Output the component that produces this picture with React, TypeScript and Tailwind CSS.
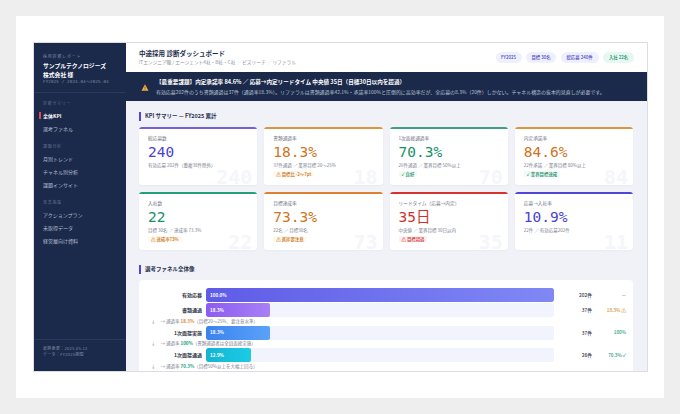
import React from "react";

const jp = "font-['Noto_Sans_CJK_JP','Noto_Sans',sans-serif]";
const mono = "font-['DejaVu_Sans_Mono','Noto_Sans_CJK_JP',monospace]";

const navGroups = [
    { title: "診断サマリー", items: ["全体KPI", "選考ファネル"] },
    { title: "課題分析", items: ["月別トレンド", "チャネル別分析", "課題インサイト"] },
    { title: "改善施策", items: ["アクションプラン", "未取得データ", "経営層向け資料"] },
];

const badges = [
    { label: "FY2025", cls: "w-[26px] bg-[#eef0fd] text-[#4f46c8]" },
    { label: "目標 30名", cls: "w-[30px] bg-[#eef0fd] text-[#4f46c8]" },
    { label: "総応募 240件", cls: "w-[38px] bg-[#eef0fd] text-[#4f46c8]" },
    { label: "入社 22名", cls: "w-[31px] bg-[#e6f8f1] text-[#0f8a62]" },
];

const kpis = [
    { label: "総応募数", value: "240", sub: "有効応募 202件（重複38件除外）", ghost: "240", bar: "bg-[#6f63d6]", color: "text-[#4a3fd0]" },
    { label: "書類通過率", value: "18.3%", sub: "37件通過 ／ 業界目標 20〜25%", ghost: "18", bar: "bg-[#d9963f]", color: "text-[#cf7420]", tag: "⚠ 目標比 -2〜7pt", tagCls: "bg-[#fff9ee] text-[#c96f12]" },
    { label: "1次面接通過率", value: "70.3%", sub: "26件通過 ／ 業界目標 50%以上", ghost: "70", bar: "bg-[#3f9f85]", color: "text-[#15906a]", tag: "✓ 良好", tagCls: "bg-[#f0fbf6] text-[#0f8a62]" },
    { label: "内定承諾率", value: "84.6%", sub: "22件承諾 ／ 業界目標 80%以上", ghost: "84", bar: "bg-[#d9963f]", color: "text-[#cf7420]", tag: "✓ 業界目標達成", tagCls: "bg-[#f0fbf6] text-[#0f8a62]" },
    { label: "入社数", value: "22", sub: "目標 30名 ／ 達成率 73.3%", ghost: "22", bar: "bg-[#22a078]", color: "text-[#15906a]", tag: "⚠ 達成率73%", tagCls: "bg-[#fff9ee] text-[#c96f12]" },
    { label: "目標達成率", value: "73.3%", sub: "22名 ／ 目標30名", ghost: "73", bar: "bg-[#dd8030]", color: "text-[#cf7420]", tag: "⚠ 進捗要注意", tagCls: "bg-[#fff9ee] text-[#c96f12]" },
    { label: "リードタイム（応募→内定）", value: "35日", sub: "中央値 ／ 業界目標 30日以内", ghost: "35", bar: "bg-[#d6332f]", color: "text-[#d22f2b]", tag: "⚠ 目標超過", tagCls: "bg-[#fdf0f0] text-[#d22f2b]" },
    { label: "応募→入社率", value: "10.9%", sub: "22件 ／ 有効応募202件", ghost: "11", bar: "bg-[#4f46d8]", color: "text-[#4a3fd0]" },
];

const funnel = [
    { name: "有効応募", pct: "100.0%", width: "100%", grad: "from-[#5f5be6] to-[#8088f5]", count: "202件", rate: "—", rateCls: "text-[#777]" },
    { name: "書類通過", pct: "18.3%", width: "18.3%", grad: "from-[#8b5cf0] to-[#a97ff5]", count: "37件", rate: "18.3% ⚠", rateCls: "text-[#d9912f]", noteVal: "18.3%", noteCls: "text-[#d9862f]", noteRest: "（目標20〜25%、要注意水準）" },
    { name: "1次面接実施", pct: "18.3%", width: "18.3%", grad: "from-[#3b82f0] to-[#5aa2f8]", count: "37件", rate: "100%", rateCls: "text-[#22a078]", noteVal: "100%", noteCls: "text-[#22a078]", noteRest: "（書類通過者は全員面接実施）" },
    { name: "1次面接通過", pct: "12.9%", width: "12.9%", grad: "from-[#14b4d0] to-[#1ccbe6]", count: "26件", rate: "70.3% ✓", rateCls: "text-[#22a078]", noteVal: "70.3%", noteCls: "text-[#22a078]", noteRest: "（目標50%以上を大幅上回る）" },
];

const SectionTitle = ({ children }: { children: React.ReactNode }) => (
    <div className="flex items-center gap-[4px] h-[9px]">
        <div className="w-[2px] h-[9px] bg-[#4f46d8]" />
        <span className="text-[5.5px] font-bold text-[#2a3350] leading-none">{children}</span>
    </div>
);

const App: React.FC = () => {
    return (
        <div className={`w-[680px] h-[414px] bg-[#eeeeee] p-[16px] ${jp}`}>
            <div className="w-[648px] h-[382px] bg-white pt-[26px] pb-[26px] pl-[17px] pr-[16px]">
                <div className="w-[615px] h-[330px] flex overflow-hidden border border-[#dcdde2]">
                    {/* sidebar */}
                    <aside className="w-[92px] shrink-0 bg-[#1b2a4a] flex flex-col">
                        <div className="h-[50px] shrink-0 border-b border-[#2a3a5c] pl-[9px] pt-[10px]">
                            <div className="text-[4px] leading-[6px] text-[#7e8aa6] tracking-[0.8px]">採用診断レポート</div>
                            <div className="text-[5.8px] leading-[9px] mt-[1.5px] font-bold text-white">サンプルテクノロジーズ<br />株式会社 様</div>
                            <div className={`text-[4.2px] leading-[6px] mt-[0.5px] text-[#7e8aa6] tracking-[0.15px] ${mono}`}>FY2025 / 2024.04〜2025.03</div>
                        </div>
                        <nav className="flex-1 pt-[5px]">
                            {navGroups.map((g) => (
                                <div key={g.title} className="mb-[6px]">
                                    <div className="pl-[9px] text-[4px] leading-[11px] tracking-[0.7px] text-[#5f6d8c]">{g.title}</div>
                                    {g.items.map((it) => (
                                        <div key={it} className={`h-[13px] flex items-center text-[5px] ${it === "全体KPI" ? "pl-[5px] font-bold text-white" : "pl-[9px] text-[#b4bdd0]"}`}>
                                            {it === "全体KPI" && <span className="w-[1.5px] h-[7px] bg-[#e5484d] mr-[2.5px]" />}
                                            {it}
                                        </div>
                                    ))}
                                </div>
                            ))}
                        </nav>
                        <div className="h-[32px] shrink-0 border-t border-[#2a3a5c] pl-[9px] pt-[5px] text-[4px] leading-[6px] tracking-[0.3px] text-[#7e8aa6]">
                            最終更新：2025.05.12<br />データ：FY2025期間
                        </div>
                    </aside>

                    <div className="flex-1 min-w-0 flex flex-col bg-[#f0f2f8]">
                        {/* header */}
                        <header className="h-[29px] shrink-0 bg-white flex items-center justify-between pl-[13px] pr-[13px]">
                            <div>
                                <div className="text-[6.5px] leading-[9px] font-bold text-[#1b2a4a]">中途採用 診断ダッシュボード</div>
                                <div className="text-[4.7px] leading-[8px] text-[#8a90a0]">ITエンジニア職 / エージェント4社・B社・C社 ／ ビズリーチ ／ リファラル</div>
                            </div>
                            <div className="flex gap-[4.5px]">
                                {badges.map((b) => (
                                    <span key={b.label} className={`h-[11px] rounded-full flex items-center justify-center whitespace-nowrap text-[4.4px] font-medium ${b.cls}`}>{b.label}</span>
                                ))}
                            </div>
                        </header>

                        {/* alert */}
                        <div className="h-[29px] shrink-0 bg-[#1b2a4a] flex items-center pl-[15px]">
                            <svg width="8" height="7" viewBox="0 0 24 22" className="shrink-0 mt-[1px]">
                                <path d="M12 1 L23 21 H1 Z" fill="#f0b03c" />
                                <rect x="11" y="8" width="2" height="7" fill="#5a3a10" />
                                <rect x="11" y="16.5" width="2" height="2" fill="#5a3a10" />
                            </svg>
                            <div className="ml-[7px]">
                                <div className="text-[5.6px] leading-[9px] font-bold text-white whitespace-nowrap">【最重要課題】内定承諾率 84.6% ／ 応募→内定リードタイム 中央値 35日（目標30日以内を超過）</div>
                                <div className="text-[4.95px] leading-[9px] text-[#b8c1d4] whitespace-nowrap">有効応募202件のうち書類通過は37件（通過率18.3%）。リファラルは書類通過率42.1%・承諾率100%と圧倒的に高効率だが、全応募の8.3%（20件）しかない。チャネル構造の抜本的見直しが必要です。</div>
                            </div>
                        </div>

                        {/* main */}
                        <main className="flex-1 min-h-0 overflow-hidden pl-[13px] pr-[14px] pt-[11px]">
                            <SectionTitle>KPI サマリー — FY2025 累計</SectionTitle>
                            <div className="grid grid-cols-4 gap-x-[7px] gap-y-[7px] mt-[6px]">
                                {kpis.map((k) => (
                                    <div key={k.label} className="relative h-[58px] bg-white rounded-[3px] overflow-hidden pl-[9px] pt-[8px] shadow-[0_1px_2px_rgba(30,40,80,0.04)]">
                                        <div className={`absolute left-0 right-0 top-0 h-[1.5px] ${k.bar}`} />
                                        <div className={`absolute right-[5px] bottom-[-2px] text-[20px] leading-[19px] font-bold text-[#f5f6fa] ${mono}`}>{k.ghost}</div>
                                        <div className="relative text-[4.7px] leading-[6px] text-[#6f7585] whitespace-nowrap">{k.label}</div>
                                        <div className={`relative text-[14.5px] leading-[15px] mt-[3.5px] ${mono} ${k.color}`}>{k.value}</div>
                                        <div className="relative text-[4.5px] leading-[6px] mt-[2px] text-[#7c8292] whitespace-nowrap">{k.sub}</div>
                                        {k.tag && <div className={`relative w-fit mt-[3.5px] px-[3px] text-[4.4px] leading-[6px] font-medium rounded-[1px] ${k.tagCls}`}>{k.tag}</div>}
                                    </div>
                                ))}
                            </div>

                            <div className="mt-[15px]">
                                <SectionTitle>選考ファネル全体像</SectionTitle>
                            </div>
                            <section className="mt-[6px] bg-white rounded-t-[4px] pt-[8px]">
                                {funnel.map((f) => (
                                    <div key={f.name}>
                                        <div className="flex items-center h-[14px]">
                                            <div className="w-[63px] mr-[4px] text-right text-[5px] font-bold text-[#2f3648] whitespace-nowrap">{f.name}</div>
                                            <div className="w-[348px] h-[14px] shrink-0 bg-[#f1f4fd] rounded-[2px] overflow-hidden">
                                                <div className={`h-full rounded-[2px] bg-gradient-to-r ${f.grad} flex items-center pl-[4px] text-[4.6px] font-bold text-white`} style={{ width: f.width }}>{f.pct}</div>
                                            </div>
                                            <div className="w-[38px] text-right text-[4.8px] font-medium text-[#2f3648]">{f.count}</div>
                                            <div className={`w-[34px] text-right text-[4.6px] font-medium whitespace-nowrap ${f.rateCls}`}>{f.rate}</div>
                                        </div>
                                        {f.noteVal ? (
                                            <div className="h-[8.5px] pl-[12px] flex items-center text-[4.5px] text-[#7c8292] whitespace-nowrap">
                                                <span className="mr-[5px]">↓</span>→ 通過率&nbsp;<span className={`font-bold ${f.noteCls}`}>{f.noteVal}</span>{f.noteRest}
                                            </div>
                                        ) : (
                                            <div className="h-[1px]" />
                                        )}
                                    </div>
                                ))}
                            </section>
                        </main>
                    </div>
                </div>
            </div>
        </div>
    );
};

export default App;
